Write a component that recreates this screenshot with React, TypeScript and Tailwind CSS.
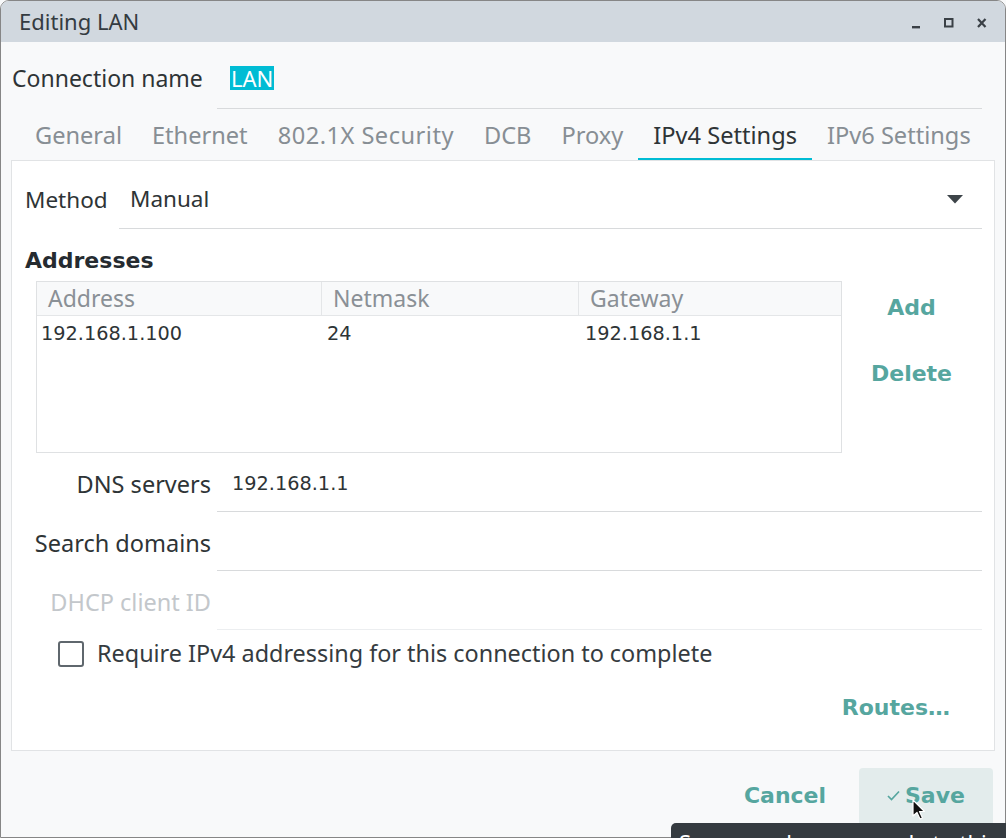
import React from "react";

const teal = "text-[#56a69f]";

function WindowControls() {
  return (
    <svg width="78" height="20" viewBox="0 0 78 20" className="text-[#3a4046]">
      <rect x="2" y="14" width="8" height="2.4" fill="currentColor" />
      <rect x="35" y="7" width="7.5" height="7.5" fill="none" stroke="currentColor" strokeWidth="2" />
      <path d="M68 7 L75.5 15 M75.5 7 L68 15" stroke="currentColor" strokeWidth="2.2" />
    </svg>
  );
}

function Cursor() {
  return (
    <svg width="16" height="22" viewBox="0 0 16 22" className="absolute left-[912px] top-[799px]">
      <path
        d="M1 1 L1 17 L5 13.5 L8 20 L10.5 19 L7.5 12.5 L12.5 12.5 Z"
        fill="#111"
        stroke="#fff"
        strokeWidth="1.2"
        strokeLinejoin="round"
      />
    </svg>
  );
}

const tabs = ["General", "Ethernet", "802.1X Security", "DCB", "Proxy", "IPv4 Settings", "IPv6 Settings"];

export default function App() {
  return (
    <div className="relative w-[1006px] h-[838px] overflow-hidden bg-[#f8f9fa] font-['Noto_Sans',sans-serif] text-[#2e3436]">
      <div className="flex flex-col h-[838px] rounded-t-[9px] border border-[#868686] overflow-hidden bg-[#f8f9fa]">
        {/* title bar */}
        <div className="h-[41px] shrink-0 flex items-center justify-between bg-[#d1d8df] pl-[18px] pr-[17px]">
          <span className="text-[22px] text-[#343b41]">Editing LAN</span>
          <WindowControls />
        </div>

        <div className="flex-1 flex flex-col px-[10px]">
          {/* connection name */}
          <div className="h-[67px] shrink-0 flex">
            <div className="w-[206px] shrink-0 pl-[1px] flex items-center pt-[6px] text-[23px]">Connection name</div>
            <div className="flex-1 mr-[13px] border-b border-[#d8dadc] flex items-center pl-[13px] pt-[6px]">
              <span className="bg-[#00bcd4] text-white text-[22px] leading-[24px] px-[1px]">LAN</span>
            </div>
          </div>

          {/* tabs */}
          <div className="h-[51px] shrink-0 flex ml-[9px]">
            {tabs.map((t) => (
              <div
                key={t}
                className={
                  t === "IPv4 Settings"
                    ? "px-[15px] flex items-center pt-[4px] border-b-2 border-[#00bcd4] text-[#2e3436] text-[23.6px]"
                    : t === "802.1X Security"
                    ? "px-[15px] flex items-center pt-[4px] border-b-2 border-transparent text-[#878e94] text-[23.6px] tracking-[0.5px]"
                    : "px-[15px] flex items-center pt-[4px] border-b-2 border-transparent text-[#878e94] text-[23.6px]"
                }
              >
                {t}
              </div>
            ))}
          </div>

          {/* page */}
          <div className="h-[591px] shrink-0 border border-[#e1e3e5] bg-white flex flex-col px-[13px]">
            <div className="mt-[9px] h-[59px] flex">
              <div className="w-[94px] shrink-0 flex items-center text-[22.5px]">Method</div>
              <div className="flex-1 mr-[-1px] border-b border-[#d8dadc] flex items-center justify-between pl-[11px] pr-[19px] text-[22.5px]">
                <span>Manual</span>
                <svg width="16" height="9" viewBox="0 0 16 9">
                  <path d="M0 0 L16 0 L8 8.5 Z" fill="#3d4449" />
                </svg>
              </div>
            </div>

            <div className="mt-[17px] h-[28px] flex items-center font-['DejaVu_Sans',sans-serif] font-bold text-[22px] text-[#252b30]">
              Addresses
            </div>

            <div className="mt-[7px] flex items-start">
              <div className="ml-[11px] w-[806px] h-[172px] shrink-0 border border-[#dfe1e3] flex flex-col">
                <div className="h-[34px] flex bg-[#f8f9fa] border-b border-[#e4e6e8] text-[23px] text-[#8a9096]">
                  <div className="w-[285px] border-r border-[#e4e6e8] flex items-center pl-[11px]">Address</div>
                  <div className="w-[257px] border-r border-[#e4e6e8] flex items-center pl-[11px]">Netmask</div>
                  <div className="flex-1 flex items-center pl-[11px]">Gateway</div>
                </div>
                <div className="h-[37px] flex font-['DejaVu_Sans',sans-serif] text-[19.3px] text-[#2e3436]">
                  <div className="w-[285px] flex items-center pl-[4px]">192.168.1.100</div>
                  <div className="w-[257px] flex items-center pl-[5px]">24</div>
                  <div className="flex-1 flex items-center pl-[6px]">192.168.1.1</div>
                </div>
              </div>
              <div className={`w-[144px] flex flex-col font-['DejaVu_Sans',sans-serif] font-bold text-[22px] ${teal}`}>
                <div className="h-[54px] flex items-center justify-center pb-[1px]">Add</div>
                <div className="mt-[12px] h-[54px] flex items-center justify-center pb-[1px]">Delete</div>
              </div>
            </div>

            {[
              { label: "DNS servers", value: "192.168.1.1", line: "border-[#d8dadc]", dim: false },
              { label: "Search domains", value: "", line: "border-[#d8dadc]", dim: false },
              { label: "DHCP client ID", value: "", line: "border-[#eceef0]", dim: true },
            ].map((r) => (
              <div key={r.label} className="h-[59px] flex">
                <div
                  className={`w-[192px] shrink-0 pr-[6px] flex items-center justify-end pt-[5px] text-[23.5px] ${
                    r.dim ? "text-[#c3c7cb]" : "text-[#2e3436]"
                  }`}
                >
                  {r.label}
                </div>
                <div
                  className={`flex-1 mr-[-1px] border-b ${r.line} flex items-center pt-[5px] pl-[15px] font-['DejaVu_Sans',sans-serif] text-[19.3px]`}
                >
                  {r.value}
                </div>
              </div>
            ))}

            <div className="mt-[6px] flex items-center">
              <div className="ml-[33px] w-[26px] h-[26px] border-2 border-[#5f676d] rounded-[3px]" />
              <span className="ml-[13px] text-[23.4px] text-[#353b40]">
                Require IPv4 addressing for this connection to complete
              </span>
            </div>

            <div
              className={`mt-[9px] h-[54px] flex items-center justify-end pr-[31px] font-['DejaVu_Sans',sans-serif] font-bold text-[22px] ${teal}`}
            >
              Routes…
            </div>
          </div>

          {/* dialog buttons */}
          <div className={`mt-[17px] flex justify-end gap-[7px] mr-[2px] font-['DejaVu_Sans',sans-serif] font-bold text-[22px] ${teal}`}>
            <div className="w-[134px] h-[58px] flex items-center justify-center pb-[4px]">Cancel</div>
            <div className="w-[134px] h-[58px] bg-[#e3ecec] rounded-[4px] flex items-center justify-center gap-[5px] pb-[4px]">
              <svg width="13" height="11" viewBox="0 0 13 11">
                <path d="M1 6 L4.5 9.5 L12 1.5" fill="none" stroke="#56a69f" strokeWidth="1.7" />
              </svg>
              <span>Save</span>
            </div>
          </div>
        </div>
      </div>

      {/* tooltip */}
      <div className="absolute left-[671px] top-[823px] w-[420px] h-[40px] bg-[#353b40] rounded-[5px] pl-[8px] pt-[3px] text-[22px] text-white whitespace-nowrap">
        Save any changes made to this connection.
      </div>
      <Cursor />
    </div>
  );
}
